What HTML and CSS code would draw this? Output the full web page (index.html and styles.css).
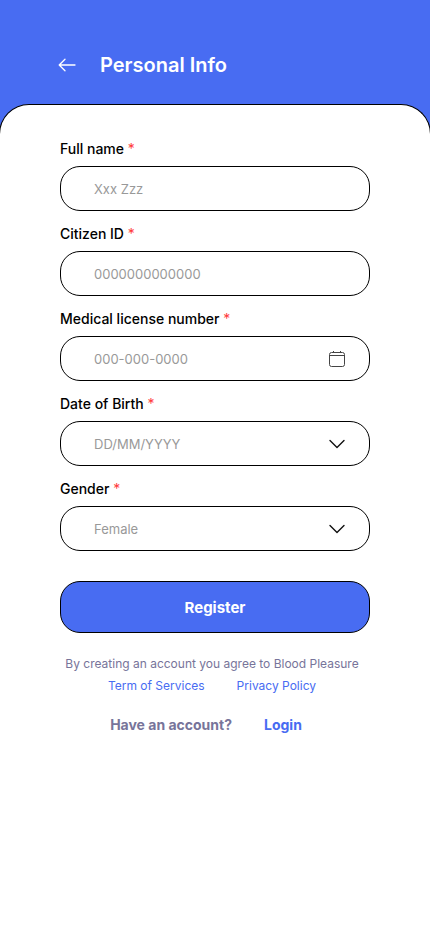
FILE: index.html
```html
<!DOCTYPE html>
<html lang="en">
<head>
<meta charset="utf-8">
<meta name="viewport" content="width=device-width, initial-scale=1">
<title>Personal Info</title>
<link rel="stylesheet" href="styles.css">
</head>
<body>
<header class="header">
  <button class="back" type="button" aria-label="Back">
    <svg width="18" height="14" viewBox="0 0 18 14" fill="none" stroke="currentColor" stroke-width="1.3" stroke-linecap="round" stroke-linejoin="round"><path d="M17 7H1.2M7 1.2L1.2 7L7 12.8"/></svg>
  </button>
  <h1 class="title">Personal Info</h1>
</header>
<main class="card">
  <form class="form">
    <div class="field">
      <label class="label" for="name">Full name <span class="required">*</span></label>
      <input class="control" id="name" type="text" placeholder="Xxx Zzz">
    </div>
    <div class="field">
      <label class="label" for="citizen">Citizen ID <span class="required">*</span></label>
      <input class="control" id="citizen" type="text" placeholder="0000000000000">
    </div>
    <div class="field">
      <label class="label" for="license">Medical license number <span class="required">*</span></label>
      <div class="control-wrap">
        <input class="control" id="license" type="text" placeholder="000-000-0000">
        <svg class="icon" width="18" height="18" viewBox="0 0 18 18" fill="none" stroke="#444" stroke-width="1"><rect x="1.5" y="2.5" width="15" height="14" rx="2"/><path d="M1.5 5.5H16.5M5.5 1V3M12.5 1V3"/></svg>
      </div>
    </div>
    <div class="field">
      <label class="label" for="birth">Date of Birth <span class="required">*</span></label>
      <div class="control-wrap">
        <select class="control" id="birth"><option>DD/MM/YYYY</option></select>
        <svg class="icon" width="18" height="18" viewBox="0 0 18 18" fill="none" stroke="#111" stroke-width="1.4" stroke-linecap="round" stroke-linejoin="round"><path d="M2 5.5L9 12.5L16 5.5"/></svg>
      </div>
    </div>
    <div class="field">
      <label class="label" for="gender">Gender <span class="required">*</span></label>
      <div class="control-wrap">
        <select class="control" id="gender"><option>Female</option></select>
        <svg class="icon" width="18" height="18" viewBox="0 0 18 18" fill="none" stroke="#111" stroke-width="1.4" stroke-linecap="round" stroke-linejoin="round"><path d="M2 5.5L9 12.5L16 5.5"/></svg>
      </div>
    </div>
    <button class="register" type="button">Register</button>
  </form>
  <footer class="footer">
    <p class="terms">By creating an account you agree to Blood Pleasure</p>
    <nav class="links">
      <a href="#terms">Term of Services</a>
      <a href="#privacy">Privacy Policy</a>
    </nav>
    <p class="account">Have an account? <a href="#login">Login</a></p>
  </footer>
</main>
</body>
</html>
```
FILE: styles.css
```css
* {
  box-sizing: border-box;
}

body {
  display: flex;
  flex-direction: column;
  min-height: 100vh;
  margin: 0;
  overflow-x: hidden;
  background: #486cf2;
  color: #000;
  font-family: Inter, "Liberation Sans", sans-serif;
}

.header {
  display: flex;
  align-items: center;
  gap: 24px;
  padding: 50px 58px 24px;
  color: #fff;
}

.back {
  display: flex;
  padding: 0;
  border: 0;
  background: none;
  color: inherit;
}

.title {
  margin: 0;
  font-size: 20px;
  font-weight: 600;
  line-height: 30px;
}

.card {
  flex: 1;
  margin: 0 -1px;
  padding: 34px 60px 24px;
  border: 1px solid #000;
  border-width: 1px 1px 0;
  border-radius: 30px 30px 0 0;
  background: #fff;
}

.form,
.field {
  display: flex;
  flex-direction: column;
}

.form {
  gap: 13px;
}

.field {
  gap: 7px;
}

.label {
  font-size: 14px;
  font-weight: 500;
  line-height: 20px;
}

.required {
  color: #ff3b3b;
  font-weight: 400;
}

.control-wrap {
  position: relative;
}

.control {
  display: block;
  width: 100%;
  height: 45px;
  padding: 0 33px;
  border: 1px solid #000;
  border-radius: 20px;
  background: #fff;
  color: #999;
  font-family: inherit;
  font-size: 13px;
  font-weight: 400;
  appearance: none;
}

.control::placeholder {
  color: #999;
}

.icon {
  position: absolute;
  top: 14px;
  right: 24px;
  pointer-events: none;
}

.register {
  height: 52px;
  margin-top: 17px;
  border: 1px solid #000;
  border-radius: 20px;
  background: #486cf2;
  color: #fff;
  font-family: inherit;
  font-size: 15px;
  font-weight: 700;
}

.footer {
  margin-top: 20px;
  padding-right: 6px;
  color: #77749a;
  font-size: 12px;
  font-weight: 400;
  line-height: 22px;
  text-align: center;
}

.footer p {
  margin: 0;
}

.footer a {
  color: #486cf2;
  text-decoration: none;
}

.terms {
  white-space: nowrap;
}

.links,
.account {
  display: flex;
  justify-content: center;
  gap: 32px;
}

.footer .account {
  margin-top: 17px;
  padding-right: 12px;
  font-size: 14px;
  font-weight: 700;
}
```
